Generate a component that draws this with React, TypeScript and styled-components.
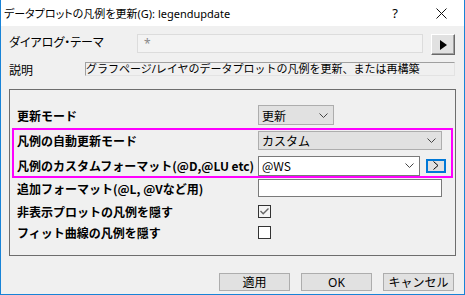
import React from 'react';
import styled, { createGlobalStyle } from 'styled-components';

const GlobalStyle = createGlobalStyle`
  body {
    margin: 0;
    background: #f0f0f0;
  }
`;

const Window = styled.div`
  width: 465px;
  height: 295px;
  box-sizing: border-box;
  border: 1px solid #1883d7;
  border-top: none;
  background: #f0f0f0;
  display: flex;
  flex-direction: column;
  font-family: 'Noto Sans', 'Noto Sans CJK JP', sans-serif;
  color: #000;
  overflow: hidden;
`;

const TitleBar = styled.div`
  height: 26px;
  flex-shrink: 0;
  background: #fff;
  display: flex;
  align-items: center;
  padding-left: 3px;
`;

const Title = styled.span`
  flex: 1;
  font-size: 11px;
  font-feature-settings: 'palt';
  white-space: nowrap;
`;

const CaptionButton = styled.div`
  width: 46px;
  height: 26px;
  display: flex;
  align-items: center;
  justify-content: center;
  font-size: 13px;
`;

const Body = styled.div`
  flex: 1;
  display: flex;
  flex-direction: column;
  padding: 8px 8px 0 8px;
`;

const TopRow = styled.div<{ $top?: number; $height: number }>`
  display: flex;
  align-items: flex-start;
  height: ${(p) => p.$height}px;
  margin-top: ${(p) => p.$top ?? 0}px;
`;

const TopLabel = styled.div<{ $width: number }>`
  width: ${(p) => p.$width}px;
  flex-shrink: 0;
  font-size: 12px;
  font-feature-settings: 'palt';
  line-height: 16px;
  padding-top: 1px;
`;

const ThemeInput = styled.div`
  width: 286px;
  height: 19px;
  box-sizing: border-box;
  border: 1px solid #dcdcdc;
  background: #f3f3f3;
  color: #8a8a8a;
  font-size: 12px;
  line-height: 17px;
  padding-left: 6px;
`;

const RunButton = styled.div`
  width: 24px;
  height: 21px;
  margin-left: 8px;
  box-sizing: border-box;
  background: #e1e1e1;
  border: 1px solid;
  border-color: #fff #696969 #696969 #fff;
  box-shadow: inset -1px -1px 0 #a0a0a0;
  display: flex;
  align-items: center;
  justify-content: center;
`;

const DescBox = styled.div`
  width: 370px;
  height: 14px;
  box-sizing: border-box;
  border-top: 1px solid #a0a0a0;
  border-left: 1px solid #a0a0a0;
  border-bottom: 1px solid #e3e3e3;
  border-right: 1px solid #e3e3e3;
  font-size: 11px;
  line-height: 12px;
  white-space: nowrap;
  overflow: hidden;
`;

const Group = styled.div`
  margin-top: 13px;
  height: 167px;
  box-sizing: border-box;
  border: 1px solid #6d6d6d;
  padding: 15px 2px 0 2px;
  display: flex;
  flex-direction: column;
`;

const Row = styled.div<{ $top?: number; $height: number; $indent: number }>`
  display: flex;
  align-items: center;
  height: ${(p) => p.$height}px;
  margin-top: ${(p) => p.$top ?? 0}px;
  padding-left: ${(p) => p.$indent}px;
`;

const Label = styled.div`
  width: 241px;
  flex-shrink: 0;
  font-size: 12px;
  font-weight: bold;
  white-space: nowrap;
  font-family: 'Noto Sans CJK JP', sans-serif;
`;

const Highlight = styled.div`
  margin-top: 3px;
  border: 2px solid #ff00ff;
  padding-top: 1px;
  height: 50px;
  box-sizing: border-box;
  display: flex;
  flex-direction: column;
`;

const Select = styled.div<{ $width: number; $height: number; $white?: boolean }>`
  width: ${(p) => p.$width}px;
  height: ${(p) => p.$height}px;
  box-sizing: border-box;
  border: 1px solid ${(p) => (p.$white ? '#7a7a7a' : '#adadad')};
  background: ${(p) => (p.$white ? '#fff' : '#e1e1e1')};
  display: flex;
  align-items: center;
  justify-content: space-between;
  padding: 0 5px 0 3px;
  font-size: 12px;
  font-family: 'Noto Sans CJK JP', sans-serif;
`;

const TextInput = styled.div`
  width: 184px;
  height: 18px;
  box-sizing: border-box;
  border: 1px solid #7a7a7a;
  background: #fff;
`;

const MoreButton = styled.div`
  width: 20px;
  height: 14px;
  margin-left: 6px;
  box-sizing: border-box;
  border: 2px solid #0078d7;
  background: #e1e1e1;
  display: flex;
  align-items: center;
  justify-content: center;
`;

const CheckBox = styled.div<{ $checked?: boolean }>`
  width: 13px;
  height: 13px;
  box-sizing: border-box;
  border: 1px solid #333;
  background: ${(p) => (p.$checked ? '#f4f4f4' : '#fff')};
  display: flex;
  align-items: center;
  justify-content: center;
`;

const Footer = styled.div`
  margin-top: 17px;
  display: flex;
  justify-content: flex-end;
  gap: 11px;
  padding-right: 2px;
`;

const Button = styled.div`
  width: 71px;
  height: 18px;
  box-sizing: border-box;
  border: 1px solid #adadad;
  background: #e1e1e1;
  display: flex;
  align-items: center;
  justify-content: center;
  font-size: 12px;
  font-family: 'Noto Sans', 'Noto Sans CJK JP', sans-serif;
`;

const Chevron = () => (
  <svg width="9" height="5" viewBox="0 0 9 5">
    <polyline points="0.5,0.5 4.5,4.5 8.5,0.5" fill="none" stroke="#444" strokeWidth="1" />
  </svg>
);

export default function App() {
  return (
    <>
      <GlobalStyle />
      <Window>
        <TitleBar>
          <Title>データプロットの凡例を更新(G): legendupdate</Title>
          <CaptionButton>?</CaptionButton>
          <CaptionButton>
            <svg width="11" height="11" viewBox="0 0 11 11">
              <path d="M0.5 0.5 L10.5 10.5 M10.5 0.5 L0.5 10.5" stroke="#111" strokeWidth="1" />
            </svg>
          </CaptionButton>
        </TitleBar>
        <Body>
          <TopRow $height={21}>
            <TopLabel $width={128}>ダイアログ・テーマ</TopLabel>
            <ThemeInput>*</ThemeInput>
            <RunButton>
              <svg width="7" height="10" viewBox="0 0 7 10">
                <path d="M0 0 L7 5 L0 10 Z" fill="#000" />
              </svg>
            </RunButton>
          </TopRow>
          <TopRow $height={14} $top={7}>
            <TopLabel $width={76}>説明</TopLabel>
            <DescBox>グラフページ/レイヤのデータプロットの凡例を更新、または再構築</DescBox>
          </TopRow>
          <Group>
            <Row $height={20} $indent={5}>
              <Label>更新モード</Label>
              <Select $width={76} $height={20}>
                更新
                <Chevron />
              </Select>
            </Row>
            <Highlight>
              <Row $height={19} $indent={3}>
                <Label>凡例の自動更新モード</Label>
                <Select $width={184} $height={19}>
                  カスタム
                  <Chevron />
                </Select>
              </Row>
              <Row $height={21} $top={5} $indent={3}>
                <Label>凡例のカスタムフォーマット(@D,@LU etc)</Label>
                <Select $width={162} $height={20} $white>
                  @WS
                  <Chevron />
                </Select>
                <MoreButton>
                  <svg width="6" height="9" viewBox="0 0 6 9">
                    <polyline points="0.5,0.5 5,4.5 0.5,8.5" fill="none" stroke="#000" strokeWidth="1" />
                  </svg>
                </MoreButton>
              </Row>
            </Highlight>
            <Row $height={18} $top={1} $indent={5}>
              <Label>追加フォーマット(@L, @Vなど用)</Label>
              <TextInput />
            </Row>
            <Row $height={22} $top={3} $indent={5}>
              <Label>非表示プロットの凡例を隠す</Label>
              <CheckBox $checked>
                <svg width="9" height="7" viewBox="0 0 9 7">
                  <polyline points="0.5,3 3.2,5.7 8.5,0.5" fill="none" stroke="#666" strokeWidth="1.4" />
                </svg>
              </CheckBox>
            </Row>
            <Row $height={21} $indent={5}>
              <Label>フィット曲線の凡例を隠す</Label>
              <CheckBox />
            </Row>
          </Group>
          <Footer>
            <Button>適用</Button>
            <Button>OK</Button>
            <Button>キャンセル</Button>
          </Footer>
        </Body>
      </Window>
    </>
  );
}
